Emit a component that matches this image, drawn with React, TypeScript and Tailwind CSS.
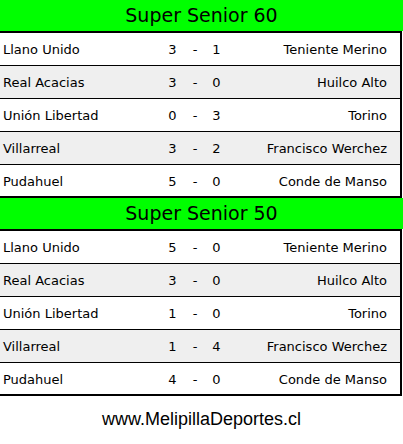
type Match = { home: string; hg: number; ag: number; away: string };

const sections: { title: string; matches: Match[] }[] = [
  {
    title: "Super Senior 60",
    matches: [
      { home: "Llano Unido", hg: 3, ag: 1, away: "Teniente Merino" },
      { home: "Real Acacias", hg: 3, ag: 0, away: "Huilco Alto" },
      { home: "Unión Libertad", hg: 0, ag: 3, away: "Torino" },
      { home: "Villarreal", hg: 3, ag: 2, away: "Francisco Werchez" },
      { home: "Pudahuel", hg: 5, ag: 0, away: "Conde de Manso" },
    ],
  },
  {
    title: "Super Senior 50",
    matches: [
      { home: "Llano Unido", hg: 5, ag: 0, away: "Teniente Merino" },
      { home: "Real Acacias", hg: 3, ag: 0, away: "Huilco Alto" },
      { home: "Unión Libertad", hg: 1, ag: 0, away: "Torino" },
      { home: "Villarreal", hg: 1, ag: 4, away: "Francisco Werchez" },
      { home: "Pudahuel", hg: 4, ag: 0, away: "Conde de Manso" },
    ],
  },
];

function Section({ title, matches }: { title: string; matches: Match[] }) {
  return (
    <div>
      <div className="h-[31px] w-full bg-[#00ff00] flex items-center justify-center text-[19px] text-black">
        {title}
      </div>
      <div className="w-[402px] border-t-2 border-b-2 border-r-2 border-black">
        {matches.map((m, i) => (
          <div
            key={m.home}
            className={
              "flex items-center text-[13px] text-black pl-[3px] pr-[13px] pt-[2px] " +
              (i % 2 === 1 ? "bg-[#efefef] " : "bg-white ") +
              (i < matches.length - 1 ? "h-[33px] border-b border-black" : "h-[31px]")
            }>
            <div className="w-[157px]">{m.home}</div>
            <div className="w-[25px] text-center">{m.hg}</div>
            <div className="w-[20px] text-center">-</div>
            <div className="w-[23px] text-center">{m.ag}</div>
            <div className="flex-1 text-right">{m.away}</div>
          </div>
        ))}
      </div>
    </div>
  );
}

export default function App() {
  return (
    <div className="w-[403px] h-[444px] bg-white overflow-hidden" style={{ fontFamily: '"DejaVu Sans", Verdana, sans-serif' }}>
      {sections.map((s) => (
        <Section key={s.title} title={s.title} matches={s.matches} />
      ))}
      <div className="h-[44px] pt-[3px] flex items-center justify-center text-[18px] text-black font-['Liberation_Sans',Arial,sans-serif]">
        www.MelipillaDeportes.cl
      </div>
    </div>
  );
}
